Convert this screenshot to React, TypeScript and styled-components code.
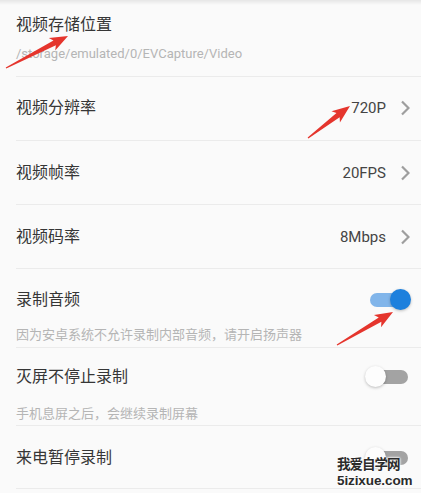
import React from 'react';
import styled, { createGlobalStyle } from 'styled-components';

const GlobalStyle = createGlobalStyle`
  html, body {
    margin: 0;
    padding: 0;
    background: #fafafa;
  }
  body {
    font-family: Roboto, "Noto Sans CJK SC", "Noto Sans", sans-serif;
  }
`;

const Screen = styled.div`
  position: relative;
  width: 421px;
  height: 493px;
  overflow: hidden;
  background: #fafafa;
  &::before {
    content: '';
    position: absolute;
    left: 0;
    right: 0;
    top: 0;
    height: 5px;
    background: linear-gradient(#e6e6e6, rgba(250, 250, 250, 0));
  }
`;

const Row = styled.div<{ $top: number; $bottom: number }>`
  display: flex;
  align-items: center;
  margin-left: 16px;
  padding: ${p => p.$top}px 11px ${p => p.$bottom}px 0;
  border-bottom: 1px solid #ebebeb;
`;

const Texts = styled.div<{ $gap: number }>`
  flex: 1;
  display: flex;
  flex-direction: column;
  gap: ${p => p.$gap}px;
`;

const Title = styled.div`
  font-size: 16px;
  line-height: 20px;
  color: #363636;
`;

const Sub = styled.div`
  font-size: 13px;
  line-height: 18px;
  color: #b5b5b5;
  white-space: nowrap;
`;

const Value = styled.span`
  font-size: 15px;
  color: #444;
  margin-right: 14px;
`;

const Chevron = () => (
  <svg width="10" height="16" viewBox="0 0 10 16">
    <path d="M2 1.5 L8.5 8 L2 14.5" fill="none" stroke="#9e9e9e" strokeWidth="2.2" />
  </svg>
);

const Track = styled.div<{ $on: boolean }>`
  position: relative;
  width: 38px;
  height: 14px;
  border-radius: 7px;
  margin-right: 2px;
  background: ${p => (p.$on ? '#81b5ea' : '#a3a3a3')};
`;

const Thumb = styled.div<{ $on: boolean }>`
  position: absolute;
  top: -4px;
  ${p => (p.$on ? 'right: -3px;' : 'left: -5px;')}
  width: 21px;
  height: 21px;
  border-radius: 50%;
  background: ${p => (p.$on ? '#1d80dd' : '#fdfdfd')};
  box-shadow: 0 1px 3px rgba(0, 0, 0, 0.25);
`;

const SwitchSlot = styled.div<{ $top?: boolean }>`
  ${p => (p.$top ? 'align-self: flex-start; margin-top: 3px;' : '')}
`;

const Switch = ({ on }: { on: boolean }) => (
  <Track $on={on}>
    <Thumb $on={on} />
  </Track>
);

const ArrowSvg = styled.svg`
  position: absolute;
  left: 0;
  top: 0;
  pointer-events: none;
`;

const Arrow = ({ x1, y1, x2, y2 }: { x1: number; y1: number; x2: number; y2: number }) => {
  const dx = x2 - x1;
  const dy = y2 - y1;
  const len = Math.hypot(dx, dy);
  const ux = dx / len;
  const uy = dy / len;
  const nx = -uy;
  const ny = ux;
  const at = (d: number, w: number) => `${x1 + ux * d + nx * w},${y1 + uy * d + ny * w}`;
  const pts = [
    at(0, 0.6),
    at(len - 15, 2.6),
    at(len - 18, 7),
    at(len, 0),
    at(len - 18, -7),
    at(len - 15, -2.6),
    at(0, -0.6),
  ].join(' ');
  return (
    <ArrowSvg width="421" height="493">
      <polygon points={pts} fill="#e5352d" />
    </ArrowSvg>
  );
};

const Watermark = styled.div`
  position: absolute;
  left: 337px;
  right: 2px;
  top: 455px;
  font-weight: 700;
  color: #2b2b2b;
  text-shadow: 0 0 2px #fff, 0 0 2px #fff, 0 0 3px #fff;
  line-height: 17px;
  white-space: nowrap;
`;

const WmCn = styled.div`
  font-family: "Noto Sans CJK SC", sans-serif;
  font-size: 13.5px;
  letter-spacing: -1px;
`;

const WmEn = styled.div`
  font-family: "Liberation Sans", Arial, sans-serif;
  font-size: 13.5px;
  letter-spacing: -0.1px;
`;

export default function App() {
  return (
    <Screen>
      <GlobalStyle />
      <Row $top={15} $bottom={13}>
        <Texts $gap={10}>
          <Title>视频存储位置</Title>
          <Sub>/storage/emulated/0/EVCapture/Video</Sub>
        </Texts>
      </Row>
      <Row $top={21} $bottom={22}>
        <Texts $gap={0}>
          <Title>视频分辨率</Title>
        </Texts>
        <Value>720P</Value>
        <Chevron />
      </Row>
      <Row $top={22} $bottom={21}>
        <Texts $gap={0}>
          <Title>视频帧率</Title>
        </Texts>
        <Value>20FPS</Value>
        <Chevron />
      </Row>
      <Row $top={22} $bottom={21}>
        <Texts $gap={0}>
          <Title>视频码率</Title>
        </Texts>
        <Value>8Mbps</Value>
        <Chevron />
      </Row>
      <Row $top={21} $bottom={3}>
        <Texts $gap={16}>
          <Title>录制音频</Title>
          <Sub>因为安卓系统不允许录制内部音频，请开启扬声器</Sub>
        </Texts>
        <SwitchSlot $top>
          <Switch on />
        </SwitchSlot>
      </Row>
      <Row $top={19} $bottom={2}>
        <Texts $gap={18}>
          <Title>灭屏不停止录制</Title>
          <Sub>手机息屏之后，会继续录制屏幕</Sub>
        </Texts>
        <SwitchSlot $top>
          <Switch on={false} />
        </SwitchSlot>
      </Row>
      <Row $top={22} $bottom={20}>
        <Texts $gap={0}>
          <Title>来电暂停录制</Title>
        </Texts>
        <SwitchSlot>
          <Switch on={false} />
        </SwitchSlot>
      </Row>
      <Arrow x1={6} y1={68} x2={68} y2={36} />
      <Arrow x1={308} y1={138} x2={350} y2={106} />
      <Arrow x1={337} y1={345} x2={393} y2={312} />
      <Watermark>
        <WmCn>我爱自学网</WmCn>
        <WmEn>5izixue.com</WmEn>
      </Watermark>
    </Screen>
  );
}
